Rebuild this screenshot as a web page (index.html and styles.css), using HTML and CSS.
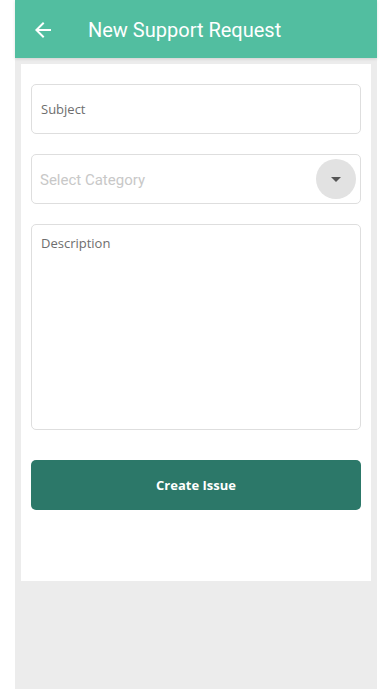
FILE: index.html
```html
<!DOCTYPE html>
<html>
<head>
<meta charset="utf-8">
<link rel="stylesheet" href="styles.css">
</head>
<body>
<div class="app">
  <header class="topbar">
    <svg class="back" width="24" height="24" viewBox="0 0 24 24"><path d="M20 11H7.83l5.59-5.59L12 4l-8 8 8 8 1.41-1.41L7.83 13H20v-2z" fill="#fff"/></svg>
    <h1 class="title">New Support Request</h1>
  </header>
  <main class="content">
    <div class="card">
      <div class="field field-subject">Subject</div>
      <div class="field field-select">
        <span class="select-text">Select Category</span>
        <span class="drop"><span class="tri"></span></span>
      </div>
      <div class="field field-desc">Description</div>
      <button class="submit">Create Issue</button>
    </div>
  </main>
</div>
</body>
</html>
```
FILE: styles.css
```css
html, body { margin: 0; padding: 0; background: #fff; }
.app {
  width: 362px;
  margin-left: 15px;
  height: 689px;
  background: #ececec;
  display: flex;
  flex-direction: column;
}
.topbar {
  height: 58px;
  background: #52bea0;
  display: flex;
  align-items: center;
  padding-left: 16px;
  box-shadow: 0 1px 3px rgba(0,0,0,0.12);
  position: relative;
  z-index: 1;
}
.back { display: block; margin-top: 2px; }
.title {
  margin: 2px 0 0 33px;
  font-family: Roboto, "Noto Sans", sans-serif;
  font-weight: 400;
  font-size: 20px;
  color: #fff;
  line-height: 1;
}
.content { padding: 6px 6px 0; }
.card {
  background: #fff;
  height: 477px;
  padding: 20px 10px;
  display: flex;
  flex-direction: column;
}
.field {
  box-sizing: border-box;
  border: 1px solid #dedede;
  border-radius: 5px;
  font-family: "Open Sans", "Noto Sans", sans-serif;
  font-size: 13px;
  color: #6e6e6e;
}
.field-subject {
  height: 50px;
  display: flex;
  align-items: center;
  padding-left: 9px;
}
.field-select {
  height: 50px;
  margin-top: 20px;
  display: flex;
  align-items: center;
  justify-content: space-between;
  padding: 0 4px 0 8px;
}
.select-text {
  font-family: Roboto, "Noto Sans", sans-serif;
  font-size: 15px;
  color: #c8c8c8;
  margin-top: 2px;
}
.drop {
  width: 40px;
  height: 40px;
  border-radius: 50%;
  background: #e2e2e2;
  display: flex;
  align-items: center;
  justify-content: center;
}
.tri {
  width: 0; height: 0;
  border-left: 5px solid transparent;
  border-right: 5px solid transparent;
  border-top: 5px solid #555;
}
.field-desc {
  height: 206px;
  margin-top: 20px;
  padding: 9px 9px;
}
.submit {
  margin-top: 30px;
  height: 50px;
  border: none;
  border-radius: 5px;
  background: #2c7869;
  color: #fff;
  font-family: "Open Sans", "Noto Sans", sans-serif;
  font-weight: 700;
  font-size: 13px;
}
```
